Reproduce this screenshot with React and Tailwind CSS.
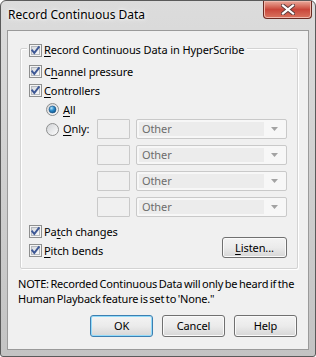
import React from "react";

const CheckBox = () => (
  <svg width="13" height="13" viewBox="0 0 13 13" className="shrink-0">
    <defs>
      <linearGradient id="cbFill" x1="0" y1="0" x2="1" y2="1">
        <stop offset="0" stopColor="#d6d8db" />
        <stop offset="1" stopColor="#fbfbfb" />
      </linearGradient>
    </defs>
    <rect x="0.5" y="0.5" width="12" height="12" fill="#f4f4f4" stroke="#8e8f8f" />
    <rect x="2.5" y="2.5" width="8" height="8" fill="url(#cbFill)" stroke="#b4b8bd" />
    <path d="M3.2 6.4 L5.3 8.9 L9.8 3.2" fill="none" stroke="#3d5795" strokeWidth="1.9" strokeLinecap="square" />
  </svg>
);

const Radio = ({ checked }) => (
  <svg width="13" height="13" viewBox="0 0 13 13" className="shrink-0">
    <defs>
      <linearGradient id="rdOuter" x1="0" y1="0" x2="1" y2="1">
        <stop offset="0" stopColor="#cfd1d4" />
        <stop offset="1" stopColor="#ffffff" />
      </linearGradient>
      <radialGradient id="rdDot" cx="0.35" cy="0.3" r="0.8">
        <stop offset="0" stopColor="#b9e6fb" />
        <stop offset="0.45" stopColor="#2e8ccb" />
        <stop offset="1" stopColor="#0c4f86" />
      </radialGradient>
    </defs>
    <circle cx="6.5" cy="6.5" r="6" fill="url(#rdOuter)" stroke="#8e8f8f" />
    {checked ? <circle cx="6.5" cy="6.5" r="3.5" fill="url(#rdDot)" stroke="#1b4f7d" strokeWidth="0.6" /> : null}
  </svg>
);

const Key = ({ children }) => <span className="underline underline-offset-[2px]">{children}</span>;

const CheckRow = ({ children }) => (
  <div className="flex h-[19px] items-center gap-[2px]">
    <CheckBox />
    <span>{children}</span>
  </div>
);

const Combo = () => (
  <div className="flex h-[20px] w-[151px] items-center rounded-[2px] border border-[#c9c9c9] bg-[#f7f7f7] p-[2px]">
    <div className="flex h-full flex-1 items-center bg-[#ececec] pl-[3px] text-[#6d6d6d]">Other</div>
    <div className="flex w-[20px] items-center justify-center">
      <svg width="7" height="4" viewBox="0 0 7 4">
        <path d="M0 0 H7 L3.5 4 Z" fill="#a3a3a3" />
      </svg>
    </div>
  </div>
);

const EditBox = () => <div className="h-[20px] w-[33px] rounded-[1px] border border-[#c9c9c9] bg-[#f0f0f0]" />;

const Button = ({ children, primary, className = "" }) => (
  <button
    className={`flex items-center justify-center rounded-[3px] border bg-linear-to-b from-[#f3f3f3] via-[#ebebeb] to-[#d6d6d6] text-black ${
      primary
        ? "border-[#3c7fb1] shadow-[inset_0_0_0_1px_#93dbfa]"
        : "border-[#707070] shadow-[inset_0_0_0_1px_#fafafa]"
    } ${className}`}
  >
    {children}
  </button>
);

export default function App() {
  const rows = [0, 1, 2, 3];

  return (
    <div className="h-[357px] w-[316px] bg-white font-['Noto_Sans',sans-serif] text-[11px] leading-[16px] tracking-[-0.1px] text-black">
      <div className="flex h-full flex-col rounded-t-[6px] rounded-b-[3px] border border-[#5a5a5a] bg-linear-to-b from-[#dcdcdc] to-[#c3c3c3] px-[6px] pb-[6px]">
        <div className="-mx-[6px] flex h-[29px] shrink-0 items-start justify-between">
          <span className="ml-[7px] mt-[6px] text-[12px] tracking-normal text-black [text-shadow:0_0_6px_#ffffff,0_0_3px_#ffffff]">
            Record Continuous Data
          </span>
          <div className="mr-[3px] flex h-[18px] w-[49px] items-center justify-center rounded-b-[4px] border border-t-0 border-[#6b2a22] bg-linear-to-b from-[#e9a99b] via-[#c9463a] to-[#d9735f] shadow-[inset_0_0_0_1px_#f0b8ac]">
            <svg width="14" height="11" viewBox="0 0 14 11">
              <path d="M2 1.5 L12 9.5 M12 1.5 L2 9.5" stroke="#5b3b3b" strokeWidth="4" strokeLinecap="square" />
              <path d="M2 1.5 L12 9.5 M12 1.5 L2 9.5" stroke="#ffffff" strokeWidth="2.2" strokeLinecap="square" />
            </svg>
          </div>
        </div>

        <div className="flex flex-1 flex-col border border-[#9a9a9a] bg-[#f0f0f0]">
          <div className="relative ml-[12px] mr-[10px] mt-[17px] rounded-[2px] border border-[#d3d3d3] pb-[8px] pl-[8px] pr-[10px] pt-[13px] shadow-[1px_1px_0_#ffffff,inset_1px_1px_0_#ffffff]">
            <div className="absolute -top-[7px] left-[6px] flex h-[16px] items-center gap-[2px] bg-[#f0f0f0] pl-[2px] pr-[3px]">
              <CheckBox />
              <span>
                <Key>R</Key>ecord Continuous Data in HyperScribe
              </span>
            </div>

            <CheckRow>
              C<Key>h</Key>annel pressure
            </CheckRow>
            <CheckRow>
              <Key>C</Key>ontrollers
            </CheckRow>

            <div className="flex h-[19px] items-center gap-[4px] pl-[17px]">
              <Radio checked />
              <span>
                <Key>A</Key>ll
              </span>
            </div>

            <div className="flex flex-col gap-[6px]">
              {rows.map((row) => (
                <div key={row} className="flex h-[20px] items-center">
                  <div className="flex w-[69px] items-center gap-[4px] pl-[17px]">
                    {row === 0 ? (
                      <>
                        <Radio />
                        <span>
                          <Key>O</Key>nly:
                        </span>
                      </>
                    ) : null}
                  </div>
                  <EditBox />
                  <div className="ml-[6px]">
                    <Combo />
                  </div>
                </div>
              ))}
            </div>

            <div className="mt-[5px] flex items-start justify-between">
              <div className="flex flex-col">
                <CheckRow>
                  Pa<Key>t</Key>ch changes
                </CheckRow>
                <CheckRow>
                  <Key>P</Key>itch bends
                </CheckRow>
              </div>
              <Button className="mt-[15px] h-[21px] w-[65px]">
                <span>
                  <Key>L</Key>isten...
                </span>
              </Button>
            </div>
          </div>

          <p className="ml-[10px] mt-[7px] whitespace-nowrap leading-[15px] tracking-[-0.2px] [word-spacing:-1px]">
            NOTE: Recorded Continuous Data will only be heard if the
            <br />
            Human Playback feature is set to 'None."
          </p>

          <div className="mr-[11px] mt-[9px] flex justify-end gap-[9px]">
            <Button primary className="h-[22px] w-[63px]">
              OK
            </Button>
            <Button className="h-[22px] w-[63px]">Cancel</Button>
            <Button className="h-[22px] w-[63px]">Help</Button>
          </div>
        </div>
      </div>
    </div>
  );
}
